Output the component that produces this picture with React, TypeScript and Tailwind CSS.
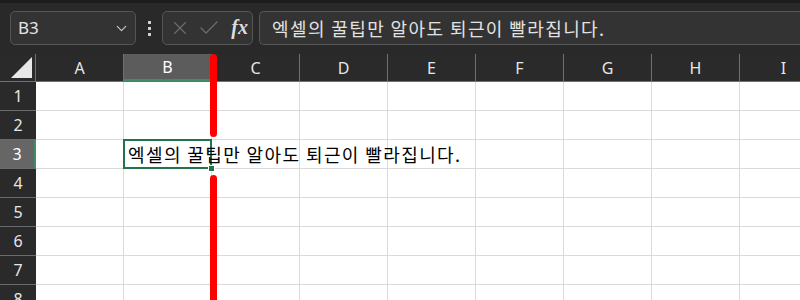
import { ChevronDown, X, Check } from "lucide-react";

// column letters and row numbers shown in the sheet
const cols = ["A", "B", "C", "D", "E", "F", "G", "H", "I"];
const rows = [1, 2, 3, 4, 5, 6, 7, 8];
const tip = "엑셀의 꿀팁만 알아도 퇴근이 빨라집니다.";

const uiFont = { fontFamily: '"Noto Sans", "Noto Sans CJK KR", sans-serif' };
const koFont = { fontFamily: '"Noto Sans CJK KR", sans-serif' };

const FormulaBar = () => (
    <div className="h-[54px] shrink-0 bg-[#292929] border-t-[3px] border-[#1c1c1c] flex items-start pt-[8px] pl-[10px] gap-0">
        {/* name box */}
        <div className="w-[126px] h-[34px] rounded-[5px] border border-[#555] bg-[#333] flex items-center justify-between pl-[7px] pr-[5px] text-[#e4e4e4]">
            <span className="text-[17px]" style={uiFont}>B3</span>
            <ChevronDown size={17} strokeWidth={1.5} className="text-[#cfcfcf]" />
        </div>
        {/* vertical dots */}
        <div className="w-[26px] h-[34px] flex flex-col items-center justify-center gap-[3px]">
            <span className="w-[3px] h-[3px] bg-[#cfcfcf]" />
            <span className="w-[3px] h-[3px] bg-[#cfcfcf]" />
            <span className="w-[3px] h-[3px] bg-[#cfcfcf]" />
        </div>
        {/* cancel / enter / fx */}
        <div className="w-[91px] h-[34px] rounded-[5px] border border-[#555] bg-[#333] flex items-center pl-[6px] pr-[4px] gap-[6px]">
            <X size={22} strokeWidth={1.2} className="text-[#6e6e6e]" />
            <Check size={24} strokeWidth={1.2} className="text-[#6e6e6e]" />
            <span className="ml-auto text-[#dcdcdc] text-[20px] italic font-bold leading-none pb-[3px]" style={{ fontFamily: '"Liberation Serif", serif' }}>
                fx
            </span>
        </div>
        {/* formula input */}
        <div className="ml-[6px] flex-1 h-[34px] rounded-l-[5px] border border-r-0 border-[#555] bg-[#333] flex items-center pl-[12px] text-[#e2e2e2] text-[18px] tracking-[1.4px] whitespace-nowrap" style={koFont}>
            {tip}
        </div>
    </div>
);

const Sheet = () => (
    <div className="relative flex-1 overflow-hidden bg-white">
        {/* column headers */}
        <div className="flex h-[28px] bg-[#2a2a2a] border-b border-[#707070]">
            <div className="w-[36px] shrink-0 relative border-r border-[#707070]">
                <div className="absolute right-[3px] bottom-[3px] w-0 h-0 border-l-[21px] border-l-transparent border-b-[21px] border-b-[#e8e8e8]" />
            </div>
            {cols.map((c) => (
                <div
                    key={c}
                    className={`w-[88px] shrink-0 flex items-center justify-center text-[16px] border-r border-[#707070] ${c === "B" ? "bg-[#5c5c5c] text-white border-b-2 border-b-[#3f8c68]" : "text-[#e6e6e6]"}`}
                    style={uiFont}
                >
                    {c}
                </div>
            ))}
        </div>
        {/* rows */}
        {rows.map((r) => (
            <div key={r} className="flex h-[29px]">
                <div
                    className={`w-[36px] shrink-0 flex items-center justify-center text-[16px] border-b border-[#6a6a6a] ${r === 3 ? "bg-[#666] text-white border-r-2 border-r-[#3f8c68]" : "bg-[#2a2a2a] text-[#e6e6e6]"}`}
                    style={uiFont}
                >
                    {r}
                </div>
                {cols.map((c) => (
                    <div key={c} className="w-[88px] shrink-0 relative border-r border-b border-[#dadada]">
                        {r === 3 && c === "B" && (
                            <>
                                <div className="absolute -left-px -top-px w-[89px] h-[30px] border-2 border-[#21744a] z-10" />
                                <div className="absolute -right-[4px] -bottom-[4px] w-[7px] h-[7px] bg-[#21744a] border border-white z-20" />
                                <div className="absolute left-[4px] top-0 h-full flex items-center text-[18px] tracking-[1.4px] text-black whitespace-nowrap z-10" style={koFont}>
                                    {tip}
                                </div>
                            </>
                        )}
                    </div>
                ))}
            </div>
        ))}
        {/* red marker line over column B/C border */}
        <div className="absolute left-[210px] top-0 w-[7px] h-[83px] rounded-full bg-[#ff0000] z-30" />
        <div className="absolute left-[210px] top-[121px] w-[7px] h-[200px] rounded-full bg-[#ff0000] z-30" />
    </div>
);

export default function App() {
    return (
        <div className="w-[800px] h-[300px] flex flex-col overflow-hidden bg-[#292929]">
            <FormulaBar />
            <Sheet />
        </div>
    );
}
